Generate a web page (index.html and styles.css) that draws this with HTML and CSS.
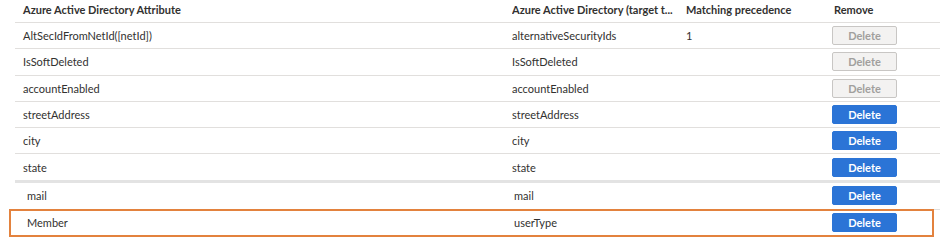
FILE: index.html
```html
<!DOCTYPE html>
<html lang="en">
<head>
  <meta charset="UTF-8">
  <title>Attribute mappings</title>
  <link rel="stylesheet" href="styles.css">
</head>
<body>
  <div class="mapping-table">
    <!-- Header -->
    <div class="row head">
      <div class="cell">Azure Active Directory Attribute</div>
      <div class="cell">Azure Active Directory (target t...</div>
      <div class="cell">Matching precedence</div>
      <div class="cell remove">Remove</div>
    </div>

    <div class="row">
      <div class="cell">AltSecIdFromNetId([netId])</div>
      <div class="cell">alternativeSecurityIds</div>
      <div class="cell">1</div>
      <div class="cell"><button class="btn" disabled>Delete</button></div>
    </div>
    <div class="row">
      <div class="cell">IsSoftDeleted</div>
      <div class="cell">IsSoftDeleted</div>
      <div class="cell"></div>
      <div class="cell"><button class="btn" disabled>Delete</button></div>
    </div>
    <div class="row">
      <div class="cell">accountEnabled</div>
      <div class="cell">accountEnabled</div>
      <div class="cell"></div>
      <div class="cell"><button class="btn" disabled>Delete</button></div>
    </div>
    <div class="row">
      <div class="cell">streetAddress</div>
      <div class="cell">streetAddress</div>
      <div class="cell"></div>
      <div class="cell"><button class="btn">Delete</button></div>
    </div>
    <div class="row">
      <div class="cell">city</div>
      <div class="cell">city</div>
      <div class="cell"></div>
      <div class="cell"><button class="btn">Delete</button></div>
    </div>
    <div class="row split">
      <div class="cell">state</div>
      <div class="cell">state</div>
      <div class="cell"></div>
      <div class="cell"><button class="btn">Delete</button></div>
    </div>

    <!-- Added mappings -->
    <div class="row added">
      <div class="cell">mail</div>
      <div class="cell">mail</div>
      <div class="cell"></div>
      <div class="cell"><button class="btn">Delete</button></div>
    </div>
    <div class="row added highlight">
      <div class="cell">Member</div>
      <div class="cell">userType</div>
      <div class="cell"></div>
      <div class="cell"><button class="btn">Delete</button></div>
    </div>
  </div>
</body>
</html>
```

FILE: styles.css
```css
body {
  margin: 0;
  padding: 0;
  background-color: #ffffff;
  font-family: Lato, "Open Sans", sans-serif;
  font-size: 11px;
  color: #323130;
}

.mapping-table {
  margin-left: 15px;
}

.row {
  display: grid;
  grid-template-columns: 497px 174px 146px 1fr;
  align-items: center;
  height: 25.3px;
  border-bottom: 1px solid #e1dfdd;
}

.cell {
  padding-left: 8px;
  white-space: nowrap;
  overflow: hidden;
}

.cell:nth-child(2),
.cell:nth-child(3),
.cell:nth-child(4) {
  padding-left: 0;
}

.head {
  height: 21px;
  padding-bottom: 1px;
  font-weight: 700;
}

.head .cell {
  margin-top: -3px;
}

.head .remove {
  padding-left: 2px;
}

.split {
  height: 25.5px;
  border-bottom: 3px solid #e3e3e3;
}

.added {
  height: 26px;
}

.added .cell:nth-child(1) {
  padding-left: 12px;
}

.added .cell:nth-child(2) {
  padding-left: 2px;
}

.highlight {
  height: 24px;
  margin-left: -6px;
  margin-right: 6px;
  margin-top: -1px;
  border: 2px solid #e3823e;
  grid-template-columns: 501px 174px 146px 1fr;
}

.highlight .cell:nth-child(1) {
  padding-left: 16px;
}

.btn {
  display: block;
  width: 65px;
  height: 19px;
  padding: 0;
  border: 1px solid #2b74d6;
  border-radius: 2px;
  background-color: #2b74d6;
  color: #ffffff;
  font-family: Lato, "Open Sans", sans-serif;
  font-size: 11px;
  font-weight: 700;
  cursor: pointer;
}

.btn:disabled {
  background-color: #f3f2f1;
  border-color: #c8c6c4;
  color: #a19f9d;
  cursor: default;
}
```
